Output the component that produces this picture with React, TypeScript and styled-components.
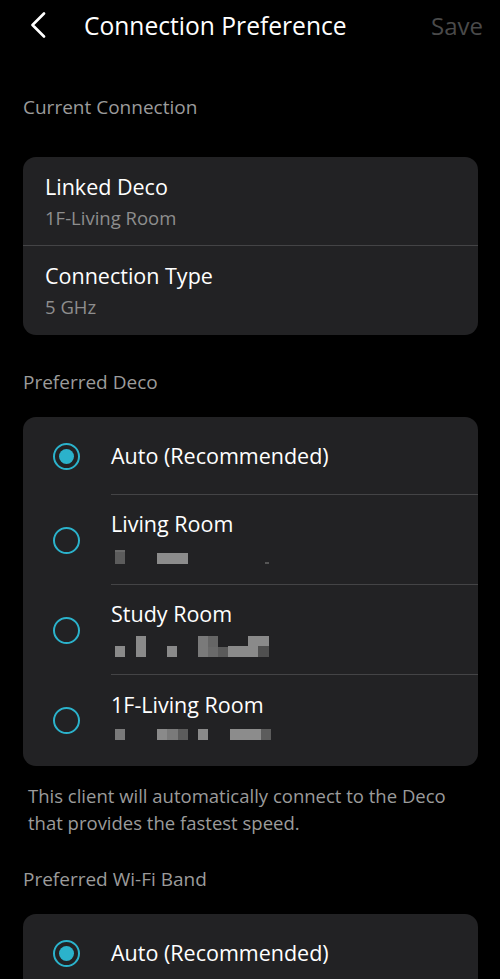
import React from "react";
import styled, { createGlobalStyle } from "styled-components";

const Global = createGlobalStyle`
  html, body { margin: 0; padding: 0; background: #000; }
  body { font-family: "Open Sans", "Noto Sans", sans-serif; -webkit-font-smoothing: antialiased; }
  * { box-sizing: border-box; }
`;

const Page = styled.div`
  width: 500px;
  height: 979px;
  background: #000;
  color: #fff;
  overflow: hidden;
`;

const Header = styled.header`
  height: 50px;
  display: flex;
  align-items: center;
  padding: 0 17px 0 29px;
`;

const Back = styled.button`
  background: none;
  border: none;
  padding: 0;
  width: 18px;
  height: 26px;
  display: flex;
  align-items: center;
  justify-content: center;
  margin-right: 37px;
`;

const Title = styled.h1`
  margin: 0;
  flex: 1;
  font-size: 24.6px;
  font-weight: 400;
  color: #fff;
`;

const Save = styled.span`
  font-size: 24px;
  color: #4a4a4a;
`;

const Content = styled.main`
  padding: 0 22px 0 23px;
  display: flex;
  flex-direction: column;
`;

const SectionLabel = styled.div<{ $top: number; $bottom: number }>`
  margin-top: ${(p) => p.$top}px;
  margin-bottom: ${(p) => p.$bottom}px;
  font-size: 19px;
  line-height: 24px;
  color: #9b9b9b;
`;

const Card = styled.section<{ $minH?: number }>`
  background: #222224;
  border-radius: 13px;
  overflow: hidden;
  flex-shrink: 0;
  min-height: ${(p) => p.$minH ?? 0}px;
`;

const InfoRow = styled.div<{ $h: number }>`
  height: ${(p) => p.$h}px;
  padding-left: 22px;
  display: flex;
  flex-direction: column;
  justify-content: center;
  gap: 5px;
  & + & {
    border-top: 1px solid #444446;
  }
`;

const RowTitle = styled.div`
  font-size: 21.5px;
  line-height: 28px;
  color: #fff;
`;

const RowSub = styled.div`
  font-size: 18.5px;
  line-height: 24px;
  color: #8e8e8e;
`;

const OptionRow = styled.div<{ $h: number }>`
  height: ${(p) => p.$h}px;
  display: flex;
  align-items: center;
`;

const RadioCell = styled.div`
  width: 88px;
  padding-left: 30px;
  display: flex;
  align-items: center;
  flex-shrink: 0;
`;

const Radio = styled.span<{ $on?: boolean }>`
  width: 27px;
  height: 27px;
  border-radius: 50%;
  border: 2.8px solid #2bb2cb;
  display: flex;
  align-items: center;
  justify-content: center;
  &::after {
    content: "";
    width: 15px;
    height: 15px;
    border-radius: 50%;
    background: #2bb2cb;
    display: ${(p) => (p.$on ? "block" : "none")};
  }
`;

const OptionBody = styled.div<{ $divider?: boolean }>`
  flex: 1;
  align-self: stretch;
  display: flex;
  flex-direction: column;
  justify-content: center;
  gap: 8px;
  border-bottom: ${(p) => (p.$divider ? "1px solid #444446" : "none")};
`;

const Note = styled.p`
  margin: 16px 0 0 5px;
  font-size: 18.5px;
  line-height: 27px;
  color: #9b9b9b;
`;

const PixelSvg = styled.svg`
  display: block;
`;

type Block = [number, number, number, number, string];

const Pixels = ({ blocks }: { blocks: Block[] }) => (
  <PixelSvg width="170" height="24" viewBox="0 0 170 24">
    {blocks.map(([x, y, w, h, c], i) => (
      <rect key={i} x={x} y={y} width={w} height={h} fill={c} />
    ))}
  </PixelSvg>
);

const livingBlocks: Block[] = [
  [4, 4, 10, 2, "#6a6a6a"],
  [4, 6, 10, 12, "#5c5c5c"],
  [46, 7, 31, 11, "#8c8c8c"],
  [154, 16, 4, 2, "#555"],
];

const studyBlocks: Block[] = [
  [4, 10, 10, 11, "#8a8a8a"],
  [25, 0, 10, 21, "#8a8a8a"],
  [56, 10, 10, 11, "#8a8a8a"],
  [87, 0, 10, 21, "#7a7a7a"],
  [97, 0, 10, 11, "#666"],
  [97, 11, 10, 10, "#6a6a6a"],
  [107, 11, 10, 10, "#5a5a5a"],
  [117, 10, 30, 11, "#8a8a8a"],
  [137, 0, 21, 10, "#8a8a8a"],
  [147, 10, 11, 11, "#505050"],
];

const firstBlocks: Block[] = [
  [4, 2, 10, 11, "#7a7a7a"],
  [46, 2, 10, 11, "#8a8a8a"],
  [56, 2, 11, 11, "#7a7a7a"],
  [67, 2, 10, 11, "#5c5c5c"],
  [87, 2, 10, 11, "#8a8a8a"],
  [119, 2, 31, 11, "#8c8c8c"],
  [150, 2, 10, 11, "#5c5c5c"],
];

export default function App() {
  return (
    <Page>
      <Global />
      <Header>
        <Back aria-label="Back">
          <svg width="18" height="26" viewBox="0 0 18 26" fill="none">
            <path d="M15 1.5 L3.5 13 L15 24.5" stroke="#fff" strokeWidth="2.6" strokeLinecap="round" strokeLinejoin="round" />
          </svg>
        </Back>
        <Title>Connection Preference</Title>
        <Save>Save</Save>
      </Header>
      <Content>
        <SectionLabel $top={45} $bottom={38}>Current Connection</SectionLabel>
        <Card>
          <InfoRow $h={88}>
            <RowTitle>Linked Deco</RowTitle>
            <RowSub>1F-Living Room</RowSub>
          </InfoRow>
          <InfoRow $h={90}>
            <RowTitle>Connection Type</RowTitle>
            <RowSub>5 GHz</RowSub>
          </InfoRow>
        </Card>

        <SectionLabel $top={35} $bottom={23}>Preferred Deco</SectionLabel>
        <Card>
          <OptionRow $h={78}>
            <RadioCell><Radio $on /></RadioCell>
            <OptionBody $divider>
              <RowTitle>Auto (Recommended)</RowTitle>
            </OptionBody>
          </OptionRow>
          <OptionRow $h={90}>
            <RadioCell><Radio /></RadioCell>
            <OptionBody $divider>
              <RowTitle>Living Room</RowTitle>
              <Pixels blocks={livingBlocks} />
            </OptionBody>
          </OptionRow>
          <OptionRow $h={90}>
            <RadioCell><Radio /></RadioCell>
            <OptionBody $divider>
              <RowTitle>Study Room</RowTitle>
              <Pixels blocks={studyBlocks} />
            </OptionBody>
          </OptionRow>
          <OptionRow $h={91}>
            <RadioCell><Radio /></RadioCell>
            <OptionBody>
              <RowTitle>1F-Living Room</RowTitle>
              <Pixels blocks={firstBlocks} />
            </OptionBody>
          </OptionRow>
        </Card>

        <Note>
          This client will automatically connect to the Deco
          <br />
          that provides the fastest speed.
        </Note>

        <SectionLabel $top={31} $bottom={23}>Preferred Wi-Fi Band</SectionLabel>
        <Card $minH={120}>
          <OptionRow $h={78}>
            <RadioCell><Radio $on /></RadioCell>
            <OptionBody $divider>
              <RowTitle>Auto (Recommended)</RowTitle>
            </OptionBody>
          </OptionRow>
        </Card>
      </Content>
    </Page>
  );
}
